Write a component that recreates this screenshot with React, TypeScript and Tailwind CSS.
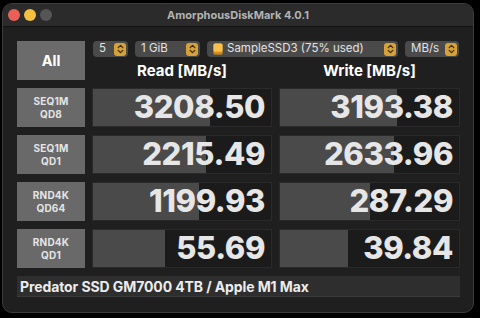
import React from 'react';

const FONT = { fontFamily: 'Inter, "Noto Sans", sans-serif' };

const Stepper: React.FC = () => (
  <span className="flex h-[13px] w-[12px] items-center justify-center rounded-[3px] bg-[#d6a237]">
    <svg width="7" height="10" viewBox="0 0 7 10" fill="none">
      <path d="M1.2 3.6 L3.5 1.4 L5.8 3.6" stroke="#3a2a08" strokeWidth="1.3" strokeLinecap="round" strokeLinejoin="round" />
      <path d="M1.2 6.4 L3.5 8.6 L5.8 6.4" stroke="#3a2a08" strokeWidth="1.3" strokeLinecap="round" strokeLinejoin="round" />
    </svg>
  </span>
);

const Select: React.FC<{ width: string; icon?: boolean; children: React.ReactNode }> = ({ width, icon, children }) => (
  <div className={`flex h-[16px] items-center justify-between rounded-[4px] bg-[#4a4a4a] pl-[6px] pr-[2px] ${width}`}>
    <span className="flex items-center gap-[4px] text-[11.5px] leading-none text-[#e2e2e2]">
      {icon && (
        <svg width="10" height="12" viewBox="0 0 10 12">
          <rect x="0.5" y="0.5" width="9" height="11" rx="1.5" fill="#f0a020" />
          <rect x="0.5" y="0.5" width="9" height="8" rx="1.5" fill="#f7c04a" />
          <rect x="1" y="9.5" width="8" height="1.2" fill="#c77a10" />
        </svg>
      )}
      {children}
    </span>
    <Stepper />
  </div>
);

const Label: React.FC<{ top: string; bottom: string }> = ({ top, bottom }) => (
  <div className="flex h-[39px] flex-col items-center justify-center bg-[#696969] text-[10px] font-bold leading-[12.5px] tracking-[0.2px] text-[#e4e4e4]">
    <span>{top}</span>
    <span>{bottom}</span>
  </div>
);

const Value: React.FC<{ value: string; fill: number }> = ({ value, fill }) => (
  <div className="relative h-[39px] overflow-hidden border border-[#2a2a2a] bg-[#1b1b1b]">
    <div className="absolute inset-y-0 left-0 bg-[#4a4a4a]" style={{ width: `${fill}px` }} />
    <div className="relative flex h-full items-center justify-end pr-[6px] text-[31px] font-extrabold tracking-[-0.4px] text-[#e6e6e6]">
      {value}
    </div>
  </div>
);

const rows = [
  { top: 'SEQ1M', bottom: 'QD8', read: '3208.50', readFill: 117, write: '3193.38', writeFill: 117 },
  { top: 'SEQ1M', bottom: 'QD1', read: '2215.49', readFill: 113, write: '2633.96', writeFill: 114 },
  { top: 'RND4K', bottom: 'QD64', read: '1199.93', readFill: 106, write: '287.29', writeFill: 90 },
  { top: 'RND4K', bottom: 'QD1', read: '55.69', readFill: 72, write: '39.84', writeFill: 68 },
];

export default function App() {
  return (
    <div className="h-[318px] w-[480px] bg-black pl-[2px] pt-[3px]" style={FONT}>
      <div className="flex h-[310px] w-[472px] flex-col overflow-hidden rounded-[10px] border border-[#3c3c3c] bg-[#1f1f1f]">
        <div className="relative flex h-[23px] shrink-0 items-center border-b border-[#111] bg-[#2b2b2b] pl-[5px]">
          <div className="flex gap-[4px]">
            <span className="h-[12px] w-[12px] rounded-full bg-[#ec5f58]" />
            <span className="h-[12px] w-[12px] rounded-full bg-[#f4be3f]" />
            <span className="h-[12px] w-[12px] rounded-full bg-[#555]" />
          </div>
          <div className="absolute inset-0 flex items-center justify-center text-[11px] font-bold text-[#b3b3b3]">
            AmorphousDiskMark 4.0.1
          </div>
        </div>
        <div className="grid grid-cols-[68px_180px_181px] gap-x-[7px] gap-y-[8px] pl-[14px] pt-[14px]">
          <div className="flex h-[39px] items-center justify-center bg-[#6b6b6b] text-[14.5px] font-bold text-white">
            All
          </div>
          <div className="col-span-2 flex h-[39px] flex-col">
            <div className="flex gap-[7px] pl-[1px]">
              <Select width="w-[35px]">5</Select>
              <Select width="w-[65px]">1 GiB</Select>
              <Select width="w-[191px]" icon>SampleSSD3 (75% used)</Select>
              <Select width="w-[54px]">MB/s</Select>
            </div>
            <div className="grid flex-1 grid-cols-[180px_181px] gap-x-[7px] pt-[3px] text-[15px] font-bold leading-none text-white">
              <div className="flex items-center justify-center">Read [MB/s]</div>
              <div className="flex items-center justify-center">Write [MB/s]</div>
            </div>
          </div>
          {rows.map((r) => (
            <React.Fragment key={r.top + r.bottom}>
              <Label top={r.top} bottom={r.bottom} />
              <Value value={r.read} fill={r.readFill} />
              <Value value={r.write} fill={r.writeFill} />
            </React.Fragment>
          ))}
          <div className="col-span-3 flex h-[21px] items-center border-b border-[#3a3a3a] bg-[#2e2e2e] pl-[3px] text-[14px] font-bold tracking-[-0.1px] text-[#ececec]">
            Predator SSD GM7000 4TB / Apple M1 Max
          </div>
        </div>
      </div>
    </div>
  );
}
